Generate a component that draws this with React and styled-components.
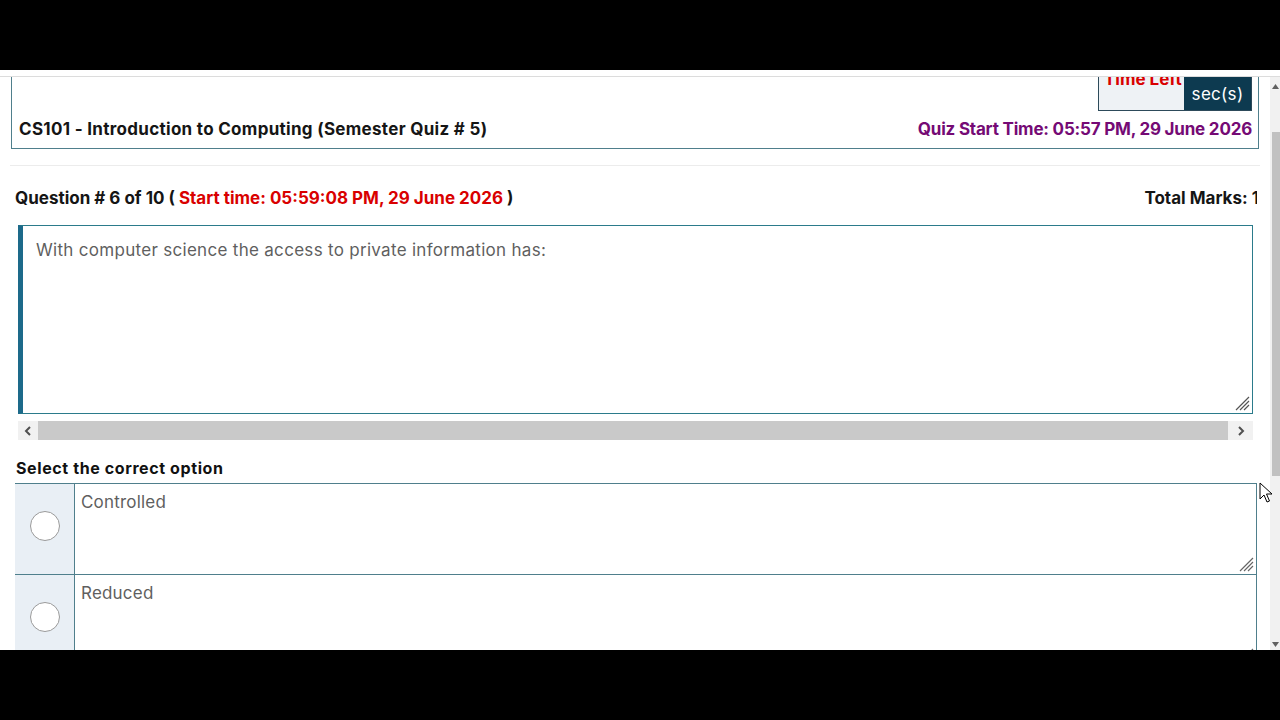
import styled, { createGlobalStyle } from 'styled-components'

const GlobalStyle = createGlobalStyle`
  html, body {
    margin: 0;
    padding: 0;
    background: #000;
  }
  body {
    font-family: Inter, "Liberation Sans", sans-serif;
    color: #111;
  }
`

const COLORS = {
  border: '#4f7f8c',
  accent: '#1d6a8a',
  red: '#d90000',
  purple: '#750a75',
  navy: '#0d3a50',
  muted: '#5f5f5f',
  cell: '#e9eff5'
}

const Screen = styled.div`
  width: 1280px;
  height: 720px;
  display: flex;
  flex-direction: column;
  background: #000;
  position: relative;
  overflow: hidden;
`

const BlackBar = styled.div`
  height: ${p => p.h}px;
  flex: none;
  background: #000;
`

const Viewport = styled.div`
  height: 580px;
  flex: none;
  display: flex;
  flex-direction: column;
  background: #fff;
`

const TopStrip = styled.div`
  height: 6px;
  flex: none;
  background: #fff;
  border-bottom: 1px solid #dcdcdc;
  position: relative;
  z-index: 2;
`

const Body = styled.div`
  flex: 1;
  display: flex;
  min-height: 0;
`

const Content = styled.div`
  flex: 1;
  overflow: hidden;
`

const HeaderCard = styled.header`
  margin: -17px 11px 0 11px;
  border: 1px solid ${COLORS.border};
  padding: 0 6px 9px 7px;
  display: flex;
  flex-direction: column;
`

const TimerRow = styled.div`
  display: flex;
  justify-content: flex-end;
`

const TimerBox = styled.div`
  display: grid;
  grid-template-columns: 85px 67px;
  height: 50px;
  border: 1px solid #2d4a5a;
  border-top: none;
  box-sizing: border-box;
`

const TimerLabel = styled.div`
  background: #eef2f5;
  color: ${COLORS.red};
  font-weight: 700;
  font-size: 17px;
  line-height: 20px;
  padding: 8px 0 0 5px;
  white-space: nowrap;
`

const TimerUnit = styled.div`
  background: ${COLORS.navy};
  color: #fff;
  font-size: 17px;
  letter-spacing: 0.3px;
  line-height: 20px;
  display: flex;
  align-items: flex-end;
  justify-content: center;
  padding-bottom: 6px;
`

const TitleRow = styled.div`
  display: flex;
  justify-content: space-between;
  align-items: center;
  margin-top: 8px;
  font-size: 17px;
  line-height: 20px;
  font-weight: 700;
`

const CourseTitle = styled.span`
  color: #151515;
  letter-spacing: 0.3px;
`

const QuizStart = styled.span`
  color: ${COLORS.purple};
  letter-spacing: -0.2px;
`

const Divider = styled.hr`
  margin: 16px 10px 0 10px;
  border: none;
  border-top: 1px solid #ececec;
`

const Section = styled.section`
  margin: 0 0 0 15px;
  width: 1242px;
  overflow: hidden;
`

const QuestionHead = styled.div`
  display: flex;
  justify-content: space-between;
  align-items: center;
  margin: 22px -2px 0 0;
  font-size: 17px;
  line-height: 20px;
  font-weight: 700;
  color: #151515;
`

const Red = styled.span`
  color: ${COLORS.red};
`

const QuestionBox = styled.div`
  position: relative;
  margin: 17px 0 0 3px;
  width: 1235px;
  height: 189px;
  box-sizing: border-box;
  border: 1px solid #2b7b8b;
  border-left: 5px solid ${COLORS.accent};
  padding: 14px 13px;
  font-size: 17px;
  letter-spacing: 0.3px;
  line-height: 20px;
  color: ${COLORS.muted};
`

const HScroll = styled.div`
  margin: 7px 0 0 3px;
  width: 1235px;
  height: 19px;
  display: grid;
  grid-template-columns: 20px 1fr 25px;
  background: #f1f1f1;
`

const ScrollArrow = styled.div`
  display: flex;
  align-items: center;
  justify-content: center;
  color: #505050;
`

const HThumb = styled.div`
  background: #c9c9c9;
`

const OptionsLabel = styled.div`
  margin: 18px 0 0 1px;
  font-size: 16px;
  letter-spacing: 0.6px;
  line-height: 20px;
  font-weight: 700;
  color: #111;
`

const OptionsTable = styled.div`
  margin: 5px 0 0 -1px;
  width: 1243px;
  border-top: 1px solid ${COLORS.border};
`

const OptionRow = styled.div`
  display: grid;
  grid-template-columns: 60px 1fr;
  height: 91px;
  border-left: 1px solid ${COLORS.border};
  border-right: 1px solid ${COLORS.border};
  border-bottom: 1px solid ${COLORS.border};
  box-sizing: border-box;
`

const RadioCell = styled.div`
  background: ${COLORS.cell};
  border-right: 1px solid ${COLORS.border};
  display: flex;
  justify-content: center;
  padding-top: 27px;
`

const Radio = styled.span`
  width: 30px;
  height: 30px;
  border-radius: 50%;
  border: 1px solid #9a9a9a;
  background: #fff;
  box-sizing: border-box;
`

const OptionText = styled.div`
  position: relative;
  padding: 8px 6px;
  font-size: 17px;
  letter-spacing: 0.2px;
  line-height: 20px;
  color: ${COLORS.muted};
`

const Grip = styled.svg`
  position: absolute;
  right: 2px;
  bottom: 2px;
`

const VScroll = styled.div`
  width: 10px;
  flex: none;
  background: #f1f1f1;
  display: flex;
  flex-direction: column;
  align-items: flex-end;
`

const VArrow = styled.div`
  height: ${p => p.h}px;
  width: 10px;
  display: flex;
  justify-content: center;
  align-items: ${p => p.down ? 'flex-end' : 'flex-start'};
  padding: ${p => p.down ? '0 0 3px' : '7px 0 0'};
  box-sizing: border-box;
`

const VThumb = styled.div`
  width: 8px;
  height: 344px;
  background: #c1c1c1;
`

const VTrack = styled.div`
  flex: 1;
`

const Cursor = styled.svg`
  position: absolute;
  left: 1259px;
  top: 482px;
  z-index: 5;
`

const ResizeGrip = ({ color = '#555' }) => (
  <Grip width='16' height='16' viewBox='0 0 16 16'>
    <path d='M15 2 L2 15 M15 6 L6 15 M15 10 L10 15' stroke={color} strokeWidth='1.2' fill='none' />
  </Grip>
)

const Chevron = ({ dir }) => (
  <svg width='8' height='10' viewBox='0 0 8 10'>
    <path
      d={dir === 'left' ? 'M6 1 L2 5 L6 9' : 'M2 1 L6 5 L2 9'}
      stroke='currentColor'
      strokeWidth='2'
      fill='none'
    />
  </svg>
)

const options = ['Controlled', 'Reduced']

export default function App () {
  return (
    <>
      <GlobalStyle />
      <Screen>
        <BlackBar h={70} />
        <Viewport>
          <TopStrip />
          <Body>
            <Content>
              <HeaderCard>
                <TimerRow>
                  <TimerBox>
                    <TimerLabel>Time Left</TimerLabel>
                    <TimerUnit>sec(s)</TimerUnit>
                  </TimerBox>
                </TimerRow>
                <TitleRow>
                  <CourseTitle>CS101 - Introduction to Computing (Semester Quiz # 5)</CourseTitle>
                  <QuizStart>Quiz Start Time: 05:57 PM, 29 June 2026</QuizStart>
                </TitleRow>
              </HeaderCard>
              <Divider />
              <Section>
                <QuestionHead>
                  <span>
                    Question # 6 of 10 ( <Red>Start time: 05:59:08 PM, 29 June 2026</Red> )
                  </span>
                  <span>Total Marks: 1</span>
                </QuestionHead>
                <QuestionBox>
                  With computer science the access to private information has:
                  <ResizeGrip />
                </QuestionBox>
                <HScroll>
                  <ScrollArrow><Chevron dir='left' /></ScrollArrow>
                  <HThumb />
                  <ScrollArrow><Chevron dir='right' /></ScrollArrow>
                </HScroll>
                <OptionsLabel>Select the correct option</OptionsLabel>
                <OptionsTable>
                  {options.map(opt => (
                    <OptionRow key={opt}>
                      <RadioCell><Radio /></RadioCell>
                      <OptionText>
                        {opt}
                        <ResizeGrip color='#666' />
                      </OptionText>
                    </OptionRow>
                  ))}
                </OptionsTable>
              </Section>
            </Content>
            <VScroll>
              <VArrow h={55}>
                <svg width='7' height='5' viewBox='0 0 7 5'><path d='M0 5 L3.5 0 L7 5 Z' fill='#606060' /></svg>
              </VArrow>
              <VThumb />
              <VTrack />
              <VArrow h={20} down>
                <svg width='7' height='5' viewBox='0 0 7 5'><path d='M0 0 L3.5 5 L7 0 Z' fill='#606060' /></svg>
              </VArrow>
            </VScroll>
          </Body>
        </Viewport>
        <BlackBar h={70} />
        <Cursor width='14' height='22' viewBox='0 0 14 22'>
          <path d='M1 1 L1 17 L5 13 L8 20 L10.5 19 L7.5 12 L13 12 Z' fill='#fff' stroke='#000' strokeWidth='1' strokeLinejoin='round' />
        </Cursor>
      </Screen>
    </>
  )
}
